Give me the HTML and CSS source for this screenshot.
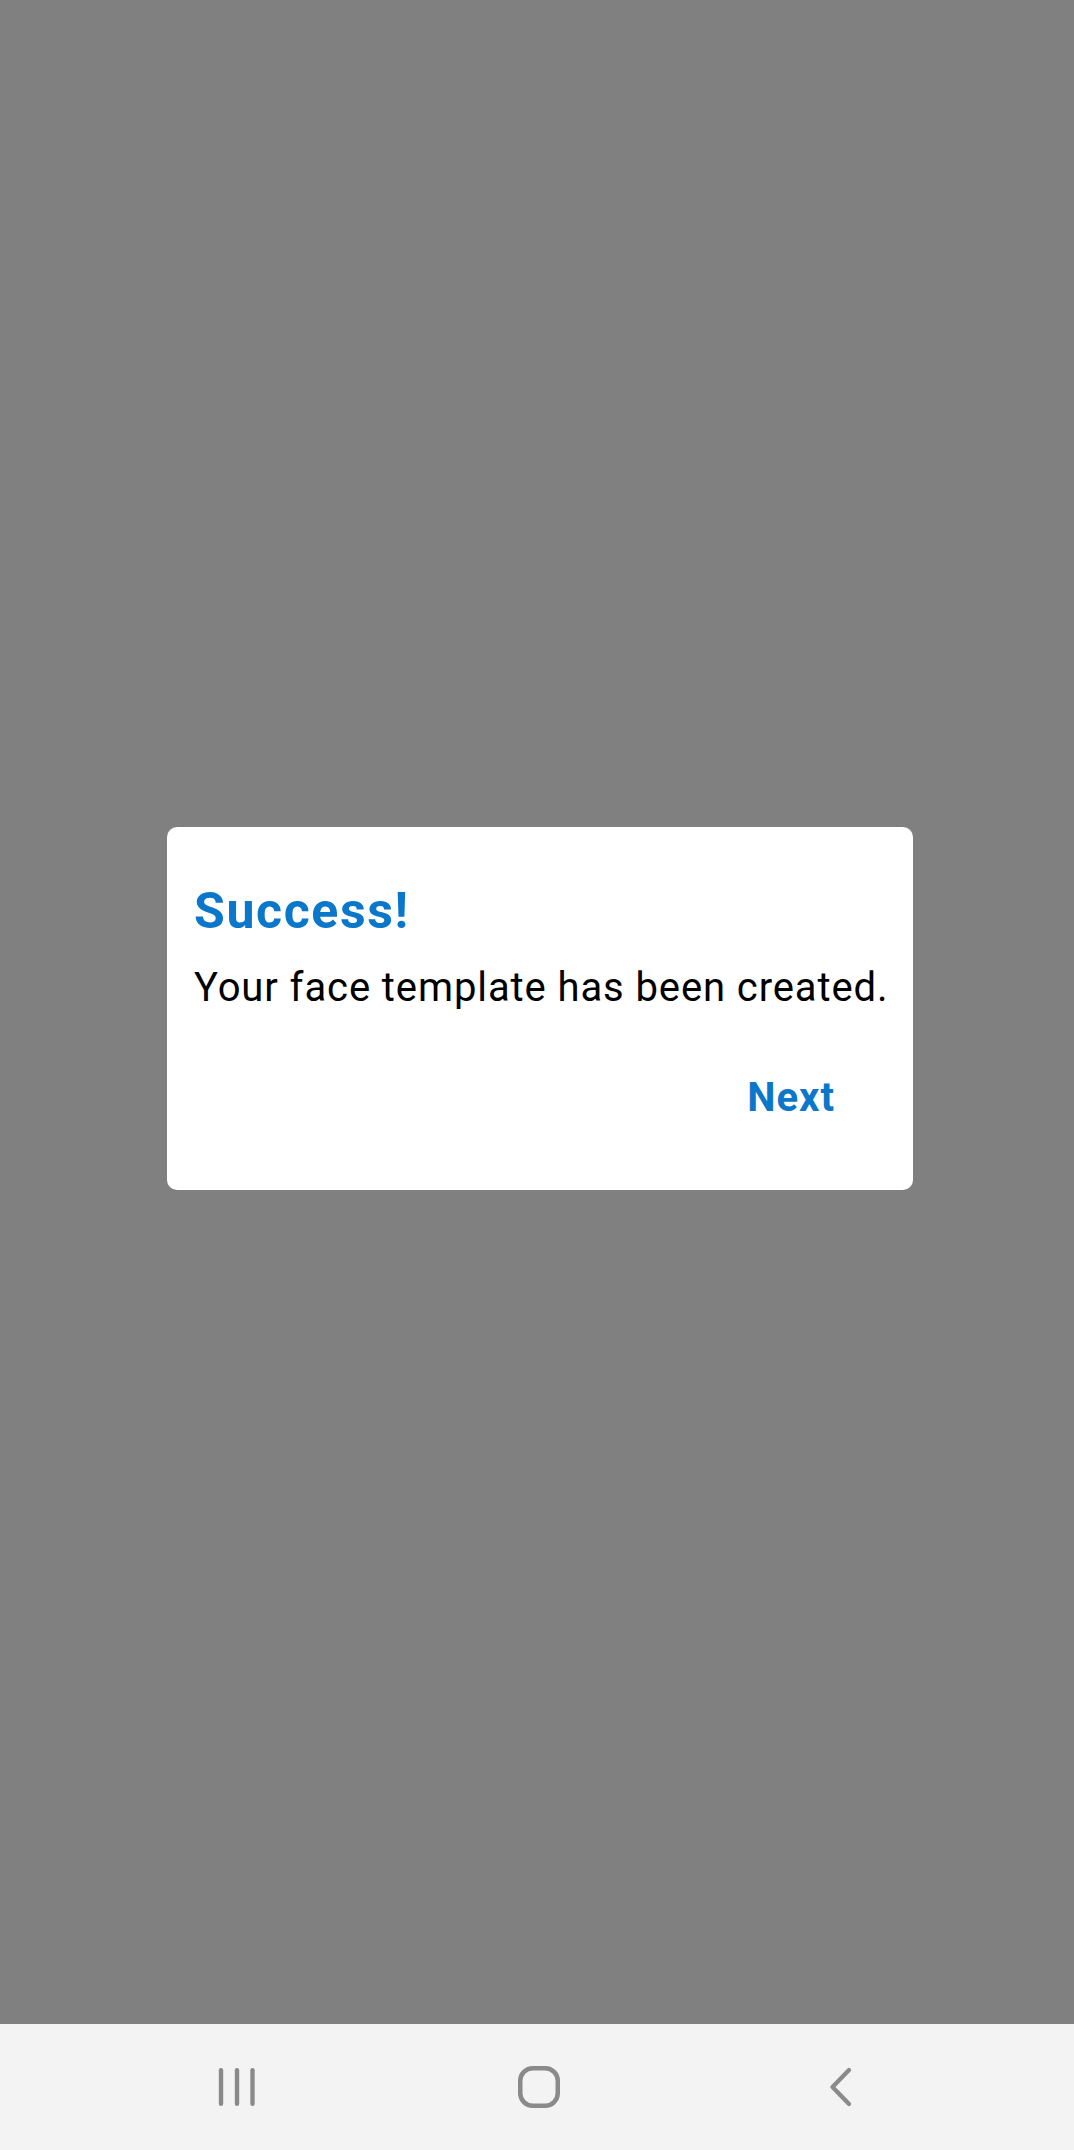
FILE: index.html
```html
<!DOCTYPE html>
<html>
<head>
<meta charset="utf-8">
<link rel="stylesheet" href="styles.css">
</head>
<body>
<div class="screen">
  <div class="dialog">
    <h1 class="title">Success!</h1>
    <p class="message">Your face template has been created.</p>
    <div class="actions">
      <span class="btn">Next</span>
    </div>
  </div>
</div>
<nav class="navbar">
  <div class="nav-cell">
    <svg width="50" height="50" viewBox="0 0 50 50">
      <g stroke="#8a8a8a" stroke-width="4.4" stroke-linecap="round">
        <line x1="9" y1="8.2" x2="9" y2="41.8"/>
        <line x1="25" y1="8.2" x2="25" y2="41.8"/>
        <line x1="40.5" y1="8.2" x2="40.5" y2="41.8"/>
      </g>
    </svg>
  </div>
  <div class="nav-cell">
    <svg width="50" height="50" viewBox="0 0 50 50">
      <rect x="6.25" y="6.25" width="37.5" height="37.5" rx="12.5" fill="none" stroke="#8a8a8a" stroke-width="4.5"/>
    </svg>
  </div>
  <div class="nav-cell">
    <svg width="40" height="50" viewBox="0 0 40 50">
      <polyline points="28,8 11.5,25 28,42" fill="none" stroke="#8a8a8a" stroke-width="4.3" stroke-linecap="round" stroke-linejoin="round"/>
    </svg>
  </div>
</nav>
</body>
</html>
```
FILE: styles.css
```css
html, body {
  margin: 0;
  padding: 0;
}
body {
  width: 1074px;
  height: 2150px;
  background: #808080;
  font-family: Roboto, "Liberation Sans", sans-serif;
  overflow: hidden;
}
.screen {
  height: 2024px;
  box-sizing: border-box;
  padding-top: 827px;
  padding-left: 167px;
  background: #808080;
}
.dialog {
  width: 746px;
  box-sizing: border-box;
  background: #ffffff;
  border-radius: 10px;
  padding: 54px 20px 68px 27px;
}
.title {
  margin: 0;
  font-size: 50px;
  line-height: 60px;
  font-weight: 700;
  letter-spacing: 1.6px;
  color: #0a77ca;
}
.message {
  margin: 23px 0 0 0;
  font-size: 40px;
  line-height: 48px;
  font-weight: 400;
  letter-spacing: 0.9px;
  white-space: nowrap;
  color: #000000;
}
.actions {
  margin-top: 62px;
  display: flex;
  justify-content: flex-end;
  padding-right: 58px;
}
.btn {
  font-size: 40px;
  line-height: 48px;
  font-weight: 700;
  letter-spacing: 1px;
  color: #0a77ca;
}
.navbar {
  height: 126px;
  background: #f3f3f3;
  display: flex;
  align-items: center;
  padding: 0 82px 0 86px;
}
.nav-cell {
  flex: 1;
  display: flex;
  justify-content: center;
  align-items: center;
}
.nav-cell svg {
  display: block;
}
```
